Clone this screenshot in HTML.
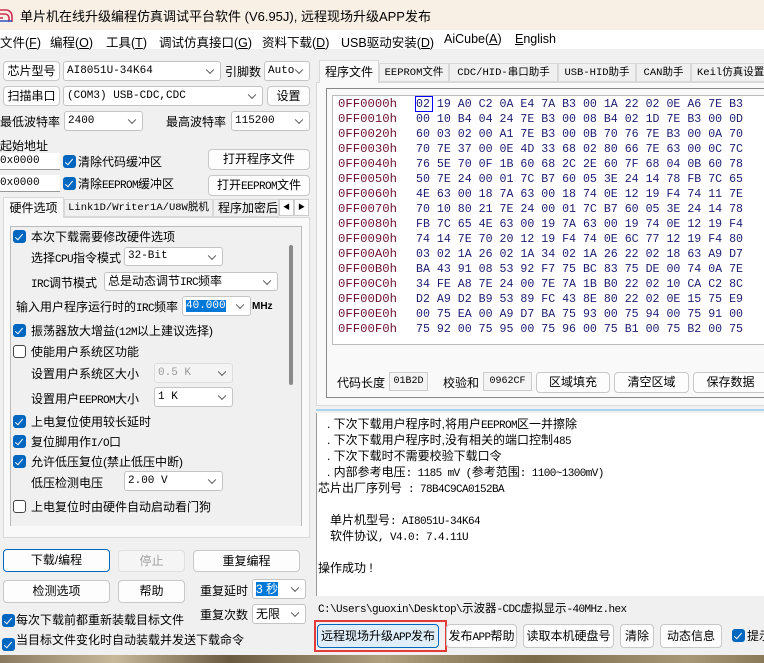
<!DOCTYPE html>
<html><head><meta charset="utf-8"><style>
*{box-sizing:border-box;margin:0;padding:0}
body{width:764px;height:663px;overflow:hidden;background:#f0f0f0;position:relative;font-family:"Liberation Sans","Noto Sans CJK SC",sans-serif;font-size:12px;color:#000}
.a{position:absolute;white-space:nowrap}
.p{white-space:pre}
.b{position:absolute;background:#fdfdfd;border:1px solid #c8c8c8;border-radius:4px;text-align:center;white-space:nowrap;font-size:12px}
.c{position:absolute;background:#fff;border:1px solid #c4c4c4;border-radius:3px;white-space:nowrap;padding-left:3px;font-family:"Liberation Mono","Noto Sans CJK SC",monospace;font-size:11px}
.c::after{content:"";position:absolute;right:7px;top:50%;width:5px;height:5px;border-right:1px solid #555;border-bottom:1px solid #555;transform:translateY(-70%) rotate(45deg)}
.k{position:absolute;width:13px;height:13px;border-radius:3px;background:#0067c0}
.k::after{content:"";position:absolute;left:4px;top:1.5px;width:3px;height:7px;border-right:1.6px solid #fff;border-bottom:1.6px solid #fff;transform:rotate(40deg)}
.u{position:absolute;width:13px;height:13px;border-radius:3px;border:1px solid #444;background:#fff}
.m{font-family:"Liberation Mono",monospace}
.l{font-family:"Liberation Mono",monospace;font-size:11px;letter-spacing:-0.6px;line-height:10px}
.hx{position:absolute;font-family:"Liberation Mono",monospace;white-space:pre}
</style></head><body>
<!-- title -->
<div class="a" style="left:0;top:0;width:764px;height:30px;background:#f8efe5"></div>
<svg class="a" style="left:0;top:6px" width="16" height="16"><path d="M0 4h6a6 6 0 0 1 6 6v6M0 8h5a4 4 0 0 1 4 4v4M0 12h3" stroke="#d03050" stroke-width="1.6" fill="none"/><path d="M0 15h12" stroke="#3050c0" stroke-width="1.5"/></svg>
<div class="a" style="left:20px;top:6px;font-size:13px">单片机在线升级编程仿真调试平台软件 (V6.95J), 远程现场升级APP发布</div>
<!-- menu -->
<div class="a" style="left:0;top:30px;width:764px;height:19px;background:#fff"></div>
<div class="a" style="left:0;top:32px;font-size:12.5px">文件(<u>F</u>)</div>
<div class="a" style="left:50px;top:32px;font-size:12.5px">编程(<u>O</u>)</div>
<div class="a" style="left:106px;top:32px;font-size:12.5px">工具(<u>T</u>)</div>
<div class="a" style="left:159px;top:32px;font-size:12.5px">调试仿真接口(<u>G</u>)</div>
<div class="a" style="left:262px;top:32px;font-size:12.5px">资料下载(<u>D</u>)</div>
<div class="a" style="left:341px;top:32px;font-size:12.5px">USB驱动安装(<u>D</u>)</div>
<div class="a" style="left:444px;top:32px;font-size:12.5px">AiCube(<u>A</u>)</div>
<div class="a" style="left:515px;top:32px;font-size:12.5px"><u>E</u>nglish</div>
<!-- left top -->
<div class="b" style="left:3px;top:61px;width:57px;height:20px;line-height:18px">芯片型号</div>
<div class="c" style="left:63px;top:61px;width:158px;height:20px;line-height:18px">AI8051U-34K64</div>
<div class="a" style="left:225px;top:63px">引脚数</div>
<div class="c" style="left:264px;top:61px;width:46px;height:20px;line-height:18px">Auto</div>
<div class="b" style="left:3px;top:86px;width:57px;height:20px;line-height:18px">扫描串口</div>
<div class="c" style="left:63px;top:86px;width:200px;height:20px;line-height:18px">(COM3) USB-CDC,CDC</div>
<div class="b" style="left:267px;top:86px;width:43px;height:20px;line-height:18px">设置</div>
<div class="a" style="left:0;top:113px">最低波特率</div>
<div class="c" style="left:64px;top:111px;width:79px;height:20px;line-height:18px">2400</div>
<div class="a" style="left:166px;top:113px">最高波特率</div>
<div class="c" style="left:231px;top:111px;width:79px;height:20px;line-height:18px">115200</div>
<div class="a" style="left:0;top:137px">起始地址</div>
<div class="a m" style="left:0;top:153px;width:60px;height:17px;background:#fff;font-size:11px;line-height:17px;border-bottom:1px solid #999">0x0000</div>
<div class="k" style="left:63px;top:155px"></div><div class="a" style="left:78px;top:153px">清除代码缓冲区</div>
<div class="b" style="left:208px;top:149px;width:102px;height:21px;line-height:19px">打开程序文件</div>
<div class="a m" style="left:0;top:175px;width:60px;height:17px;background:#fff;font-size:11px;line-height:17px;border-bottom:1px solid #999">0x0000</div>
<div class="k" style="left:63px;top:177px"></div><div class="a" style="left:78px;top:175px">清除<span class="l">EEPROM</span>缓冲区</div>
<div class="b" style="left:208px;top:175px;width:102px;height:21px;line-height:19px">打开<span class="l">EEPROM</span>文件</div>
<!-- tabs left -->
<div class="a" style="left:3px;top:217px;width:307px;height:321px;background:#f9f9f9;border:1px solid #d9d9d9"></div>
<div class="a" style="left:3px;top:197px;width:61px;height:21px;background:#f9f9f9;border:1px solid #d9d9d9;border-bottom:none;text-align:center;line-height:20px">硬件选项</div>
<div class="a" style="left:64px;top:199px;width:149px;height:18px;background:#f0f0f0;border:1px solid #d9d9d9;text-align:center;line-height:17px;font-family:'Liberation Mono','Noto Sans CJK SC',monospace;font-size:10.5px">Link1D/Writer1A/U8W脱机</div>
<div class="a" style="left:213px;top:199px;width:66px;height:18px;background:#f0f0f0;border:1px solid #d9d9d9;line-height:17px;padding-left:4px;overflow:hidden">程序加密后</div>
<div class="a" style="left:279px;top:199px;width:15px;height:17px;border:1px solid #ccc;background:#fff;font-size:7px;text-align:center;line-height:15px">◀</div>
<div class="a" style="left:294px;top:199px;width:15px;height:17px;border:1px solid #ccc;background:#fff;font-size:7px;text-align:center;line-height:15px">▶</div>
<div class="a" style="left:10px;top:226px;width:292px;height:300px;border:1px solid #bbb;border-bottom:none;background:#f0f0f0"></div>
<div class="a" style="left:289px;top:245px;width:4px;height:140px;background:#8a8a8a;border-radius:2px"></div>
<div class="k" style="left:13px;top:230px"></div><div class="a" style="left:31px;top:228px">本次下载需要修改硬件选项</div>
<div class="a" style="left:31px;top:249px">选择<span class="l">CPU</span>指令模式</div><div class="c" style="left:124px;top:247px;width:99px;height:19px;line-height:17px">32-Bit</div>
<div class="a" style="left:31px;top:274px"><span class="l">IRC</span>调节模式</div><div class="c" style="left:104px;top:272px;width:174px;height:19px;line-height:17px;font-family:'Liberation Sans','Noto Sans CJK SC',sans-serif;font-size:12px">总是动态调节<span class="l">IRC</span>频率</div>
<div class="a" style="left:16px;top:298px">输入用户程序运行时的<span class="l">IRC</span>频率</div><div class="c" style="left:182px;top:296px;width:69px;height:20px;line-height:18px"><span style="background:#0078d7;color:#fff">40.000</span></div><div class="a" style="left:252px;top:301px;font-size:10px;font-weight:bold">MHz</div>
<div class="k" style="left:13px;top:324px"></div><div class="a" style="left:31px;top:322px">振荡器放大增益(<span class="l">12M</span>以上建议选择)</div>
<div class="u" style="left:13px;top:345px"></div><div class="a" style="left:31px;top:343px">使能用户系统区功能</div>
<div class="a" style="left:31px;top:365px">设置用户系统区大小</div><div class="c" style="left:154px;top:363px;width:79px;height:20px;line-height:18px;color:#999;background:#f4f4f4;border-color:#ddd">0.5 K</div>
<div class="a" style="left:31px;top:390px">设置用户<span class="l">EEPROM</span>大小</div><div class="c" style="left:154px;top:387px;width:79px;height:20px;line-height:18px">1    K</div>
<div class="k" style="left:13px;top:415px"></div><div class="a" style="left:31px;top:413px">上电复位使用较长延时</div>
<div class="k" style="left:13px;top:435px"></div><div class="a" style="left:31px;top:433px">复位脚用作<span class="l">I/O</span>口</div>
<div class="k" style="left:13px;top:455px"></div><div class="a" style="left:31px;top:453px">允许低压复位(禁止低压中断)</div>
<div class="a" style="left:31px;top:474px">低压检测电压</div><div class="c" style="left:124px;top:471px;width:99px;height:20px;line-height:18px">2.00 V</div>
<div class="u" style="left:13px;top:500px"></div><div class="a" style="left:31px;top:498px">上电复位时由硬件自动启动看门狗</div>
<!-- bottom left -->
<div class="b" style="left:3px;top:549px;width:107px;height:23px;line-height:21px;border-color:#0067c0">下载/编程</div>
<div class="b" style="left:118px;top:550px;width:67px;height:22px;line-height:20px;color:#a0a0a0;background:#f5f5f5;border-color:#e0e0e0">停止</div>
<div class="b" style="left:193px;top:550px;width:107px;height:22px;line-height:20px">重复编程</div>
<div class="b" style="left:3px;top:580px;width:107px;height:23px;line-height:21px">检测选项</div>
<div class="b" style="left:118px;top:580px;width:67px;height:23px;line-height:21px">帮助</div>
<div class="a" style="left:200px;top:582px">重复延时</div><div class="c" style="left:252px;top:579px;width:54px;height:20px;line-height:18px;font-family:'Liberation Sans','Noto Sans CJK SC',sans-serif;font-size:12px"><span style="background:#0078d7;color:#fff">3 秒</span></div>
<div class="a" style="left:200px;top:606px">重复次数</div><div class="c" style="left:252px;top:604px;width:54px;height:20px;line-height:18px;font-family:'Liberation Sans','Noto Sans CJK SC',sans-serif;font-size:12px">无限</div>
<div class="k" style="left:2px;top:614px"></div><div class="a" style="left:16px;top:611px">每次下载前都重新装载目标文件</div>
<div class="k" style="left:2px;top:638px"></div><div class="a" style="left:16px;top:631px">当目标文件变化时自动装载并发送下载命令</div>
<!-- right tabs -->
<div class="a" style="left:316px;top:82px;width:448px;height:324px;background:#f9f9f9;border:1px solid #d9d9d9;border-right:none"></div>
<div class="a" style="left:319px;top:60px;width:60px;height:23px;background:#f9f9f9;border:1px solid #d9d9d9;border-bottom:none;text-align:center;line-height:22px">程序文件</div>
<div class="a" style="left:379px;top:63px;width:70px;height:19px;border:1px solid #d9d9d9;text-align:center;line-height:18px;font-size:10.5px;font-family:'Liberation Mono','Noto Sans CJK SC',monospace">EEPROM文件</div>
<div class="a" style="left:449px;top:63px;width:109px;height:19px;border:1px solid #d9d9d9;text-align:center;line-height:18px;font-size:10.5px;font-family:'Liberation Mono','Noto Sans CJK SC',monospace">CDC/HID-串口助手</div>
<div class="a" style="left:558px;top:63px;width:78px;height:19px;border:1px solid #d9d9d9;text-align:center;line-height:18px;font-size:10.5px;font-family:'Liberation Mono','Noto Sans CJK SC',monospace">USB-HID助手</div>
<div class="a" style="left:636px;top:63px;width:55px;height:19px;border:1px solid #d9d9d9;text-align:center;line-height:18px;font-size:10.5px;font-family:'Liberation Mono','Noto Sans CJK SC',monospace">CAN助手</div>
<div class="a" style="left:691px;top:63px;width:80px;height:19px;border:1px solid #d9d9d9;padding-left:5px;line-height:18px;font-size:10.5px;font-family:'Liberation Mono','Noto Sans CJK SC',monospace">Keil仿真设置</div>
<div class="a" style="left:326px;top:88px;width:440px;height:310px;border:1px solid #888;border-right:none"></div>
<div class="a" style="left:332px;top:95px;width:432px;height:250px;background:#fff;border:1px solid #bbb;border-right:none"></div>
<div class="hx" style="left:338px;top:97px;font-size:12.3px;line-height:15px;color:#6b1030">0FF0000h
0FF0010h
0FF0020h
0FF0030h
0FF0040h
0FF0050h
0FF0060h
0FF0070h
0FF0080h
0FF0090h
0FF00A0h
0FF00B0h
0FF00C0h
0FF00D0h
0FF00E0h
0FF00F0h</div>
<div class="hx" style="left:416px;top:97px;font-size:11.6px;line-height:15px;color:#1c1c70">02 19 A0 C2 0A E4 7A B3 00 1A 22 02 0E A6 7E B3
00 10 B4 04 24 7E B3 00 08 B4 02 1D 7E B3 00 0D
60 03 02 00 A1 7E B3 00 0B 70 76 7E B3 00 0A 70
70 7E 37 00 0E 4D 33 68 02 80 66 7E 63 00 0C 7C
76 5E 70 0F 1B 60 68 2C 2E 60 7F 68 04 0B 60 78
50 7E 24 00 01 7C B7 60 05 3E 24 14 78 FB 7C 65
4E 63 00 18 7A 63 00 18 74 0E 12 19 F4 74 11 7E
70 10 80 21 7E 24 00 01 7C B7 60 05 3E 24 14 78
FB 7C 65 4E 63 00 19 7A 63 00 19 74 0E 12 19 F4
74 14 7E 70 20 12 19 F4 74 0E 6C 77 12 19 F4 80
03 02 1A 26 02 1A 34 02 1A 26 22 02 18 63 A9 D7
BA 43 91 08 53 92 F7 75 BC 83 75 DE 00 74 0A 7E
34 FE A8 7E 24 00 7E 7A 1B B0 22 02 10 CA C2 8C
D2 A9 D2 B9 53 89 FC 43 8E 80 22 02 0E 15 75 E9
00 75 EA 00 A9 D7 BA 75 93 00 75 94 00 75 91 00
75 92 00 75 95 00 75 96 00 75 B1 00 75 B2 00 75</div>
<div class="a" style="left:415px;top:96px;width:18px;height:16px;border:1px solid #0000ff"></div>
<div class="a" style="left:337px;top:374px">代码长度</div>
<div class="a m" style="left:389px;top:372px;width:39px;height:19px;border:1px solid #ccc;background:#f4f4f4;font-size:10px;text-align:center;line-height:17px">01B2D</div>
<div class="a" style="left:443px;top:374px">校验和</div>
<div class="a m" style="left:483px;top:372px;width:49px;height:19px;border:1px solid #ccc;background:#f4f4f4;font-size:10px;text-align:center;line-height:17px">0962CF</div>
<div class="b" style="left:536px;top:372px;width:74px;height:21px;line-height:19px">区域填充</div>
<div class="b" style="left:614px;top:372px;width:75px;height:21px;line-height:19px">清空区域</div>
<div class="b" style="left:693px;top:372px;width:75px;height:21px;line-height:19px">保存数据</div>
<div class="a" style="left:316px;top:409px;width:448px;height:2px;background:#a8d4f0"></div>
<!-- log -->
<div class="a" style="left:316px;top:413px;width:448px;height:183px;background:#fff;border-left:1px solid #999"></div>
<div class="a" style="left:327px;top:415px">.  下次下载用户程序时,将用户<span class="l">EEPROM</span>区一并擦除</div>
<div class="a" style="left:327px;top:431px">.  下次下载用户程序时,没有相关的端口控制<span class="l">485</span></div>
<div class="a" style="left:327px;top:447px">.  下次下载时不需要校验下载口令</div>
<div class="a" style="left:327px;top:463px">.  内部参考电压<span class="l">: 1185 mV (</span>参考范围<span class="l">: 1100~1300mV)</span></div>
<div class="a" style="left:318px;top:479px">芯片出厂序列号<span class="l"> : 78B4C9CA0152BA</span></div>
<div class="a" style="left:330px;top:511px">单片机型号<span class="l">: AI8051U-34K64</span></div>
<div class="a" style="left:330px;top:527px">软件协议<span class="l">, V4.0: 7.4.11U</span></div>
<div class="a" style="left:318px;top:559px">操作成功 !</div>
<div class="a" style="left:318px;top:600px;font-size:11.5px"><span class="l">C:\Users\guoxin\Desktop\</span>示波器<span class="l">-CDC</span>虚拟显示<span class="l">-40MHz.hex</span></div>
<div class="a" style="left:314px;top:620px;width:133px;height:32px;border:2px solid #e53a3a"></div>
<div class="b" style="left:317px;top:624px;width:122px;height:24px;line-height:22px;background:#e0eef9;border-color:#0067c0">远程现场升级<span class="l">APP</span>发布</div>
<div class="b" style="left:446px;top:624px;width:71px;height:24px;line-height:22px">发布<span class="l">APP</span>帮助</div>
<div class="b" style="left:523px;top:624px;width:91px;height:24px;line-height:22px">读取本机硬盘号</div>
<div class="b" style="left:620px;top:624px;width:34px;height:24px;line-height:22px">清除</div>
<div class="b" style="left:660px;top:624px;width:62px;height:24px;line-height:22px">动态信息</div>
<div class="k" style="left:732px;top:629px"></div><div class="a" style="left:747px;top:627px">提示</div>
<!-- bottom strip -->
<div class="a" style="left:0;top:655px;width:764px;height:8px;background:linear-gradient(90deg,#8a7a60,#c8b89a 15%,#6a5a40 30%,#b0a080 50%,#7a6a4a 70%,#a89878 90%,#8a7a5a)"></div>
</body></html>
